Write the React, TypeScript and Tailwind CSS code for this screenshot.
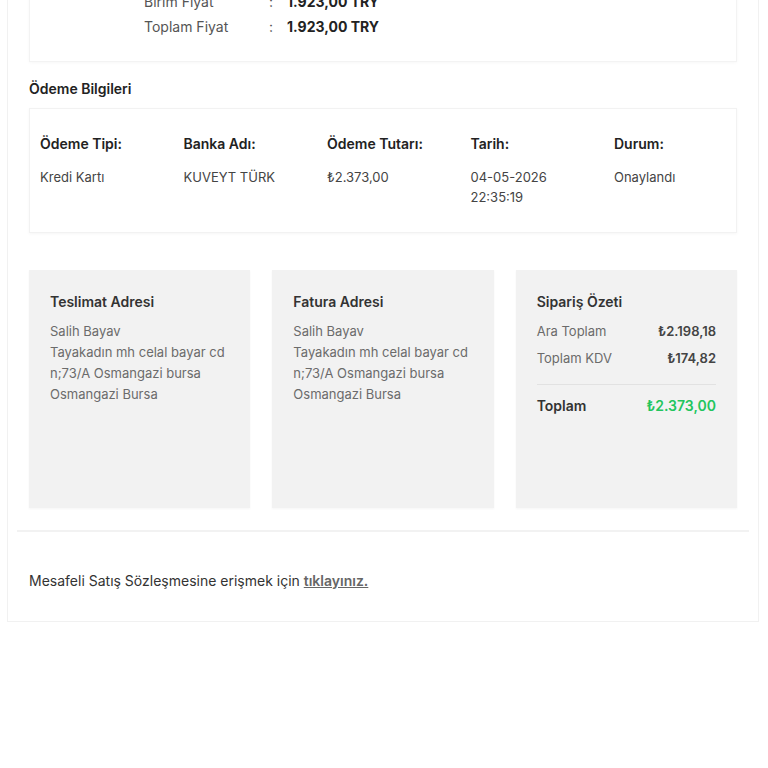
import React from 'react';

const font = { fontFamily: 'Inter, "Noto Sans", "DejaVu Sans", sans-serif' };

const priceRows = [
  { label: 'Birim Fiyat', value: '1.923,00 TRY' },
  { label: 'Toplam Fiyat', value: '1.923,00 TRY' },
];

const payment = [
  { label: 'Ödeme Tipi:', value: ['Kredi Kartı'] },
  { label: 'Banka Adı:', value: ['KUVEYT TÜRK'] },
  { label: 'Ödeme Tutarı:', value: ['₺2.373,00'] },
  { label: 'Tarih:', value: ['04-05-2026', '22:35:19'] },
  { label: 'Durum:', value: ['Onaylandı'] },
];

const address = ['Salih Bayav', 'Tayakadın mh celal bayar cd', 'n;73/A Osmangazi bursa', 'Osmangazi Bursa'];

function AddressCard({ title }: { title: string }) {
  return (
    <div className="h-[238px] bg-[#f2f2f2] px-[21px] pt-[21px] shadow-[0_1px_2px_rgba(0,0,0,0.04)]">
      <h3 className="text-[14px] leading-[22px] font-semibold text-[#333]">{title}</h3>
      <div className="mt-[8px] text-[13px] leading-[21px] text-[#6b6b6b]">
        {address.map((line) => (
          <p key={line}>{line}</p>
        ))}
      </div>
    </div>
  );
}

export default function App() {
  return (
    <div className="min-h-[768px] bg-white" style={font}>
      <div className="-mt-[54px] mr-[9px] ml-[7px] border border-[#f1f1f1] px-[21px] pt-[21px] pb-[30px]">
        {/* Product price card */}
        <div className="border border-[#f3f3f3] pt-[20px] pb-[22px] pl-[114px] shadow-[0_1px_3px_rgba(0,0,0,0.03)]">
          {priceRows.map((r) => (
            <div key={r.label} className="flex h-[25px] items-center text-[14px]">
              <span className="w-[125px] text-[#555]">{r.label}</span>
              <span className="w-[18px] text-[#555]">:</span>
              <span className="font-bold text-[#222]">{r.value}</span>
            </div>
          ))}
        </div>

        <h2 className="mt-[17px] mb-[9px] text-[14px] leading-[20px] font-semibold text-[#222]">
          Ödeme Bilgileri
        </h2>

        {/* Payment card */}
        <div className="grid grid-cols-[143.5px_143.5px_143.5px_143.5px_1fr] border border-[#f2f2f2] pt-[24px] pb-[25px] pl-[10px] shadow-[0_1px_3px_rgba(0,0,0,0.04)]">
          {payment.map((p) => (
            <div key={p.label}>
              <div className="mt-[1px] text-[14px] leading-[20px] font-semibold text-[#222]">{p.label}</div>
              <div className="mt-[13px] text-[13px] leading-[20px] text-[#444]">
                {p.value.map((v) => (
                  <p key={v}>{v}</p>
                ))}
              </div>
            </div>
          ))}
        </div>

        {/* Address + summary */}
        <div className="mt-[37px] grid grid-cols-3 gap-[22px]">
          <AddressCard title="Teslimat Adresi" />
          <AddressCard title="Fatura Adresi" />
          <div className="h-[238px] bg-[#f2f2f2] px-[21px] pt-[21px] shadow-[0_1px_2px_rgba(0,0,0,0.04)]">
            <h3 className="text-[14px] leading-[22px] font-semibold text-[#333]">Sipariş Özeti</h3>
            <div className="mt-[8px] flex flex-col gap-[6px] text-[13px] leading-[21px]">
              <div className="flex justify-between">
                <span className="text-[#6b6b6b]">Ara Toplam</span>
                <span className="font-semibold text-[#444]">₺2.198,18</span>
              </div>
              <div className="flex justify-between">
                <span className="text-[#6b6b6b]">Toplam KDV</span>
                <span className="font-semibold text-[#444]">₺174,82</span>
              </div>
            </div>
            <div className="mt-[15px] border-t border-[#e2e2e2] pt-[10px]">
              <div className="flex justify-between text-[14px] leading-[22px] font-semibold">
                <span className="text-[#333]">Toplam</span>
                <span className="text-[#22c55e]">₺2.373,00</span>
              </div>
            </div>
          </div>
        </div>

        <div className="-mx-[12px] mt-[22px] h-[2px] bg-[#f2f2f2]" />

        <p className="mt-[39px] text-[14px] leading-[20px] text-[#333]">
          Mesafeli Satış Sözleşmesine erişmek için{' '}
          <a href="#" className="font-semibold text-[#666] underline">
            tıklayınız.
          </a>
        </p>
      </div>
    </div>
  );
}
